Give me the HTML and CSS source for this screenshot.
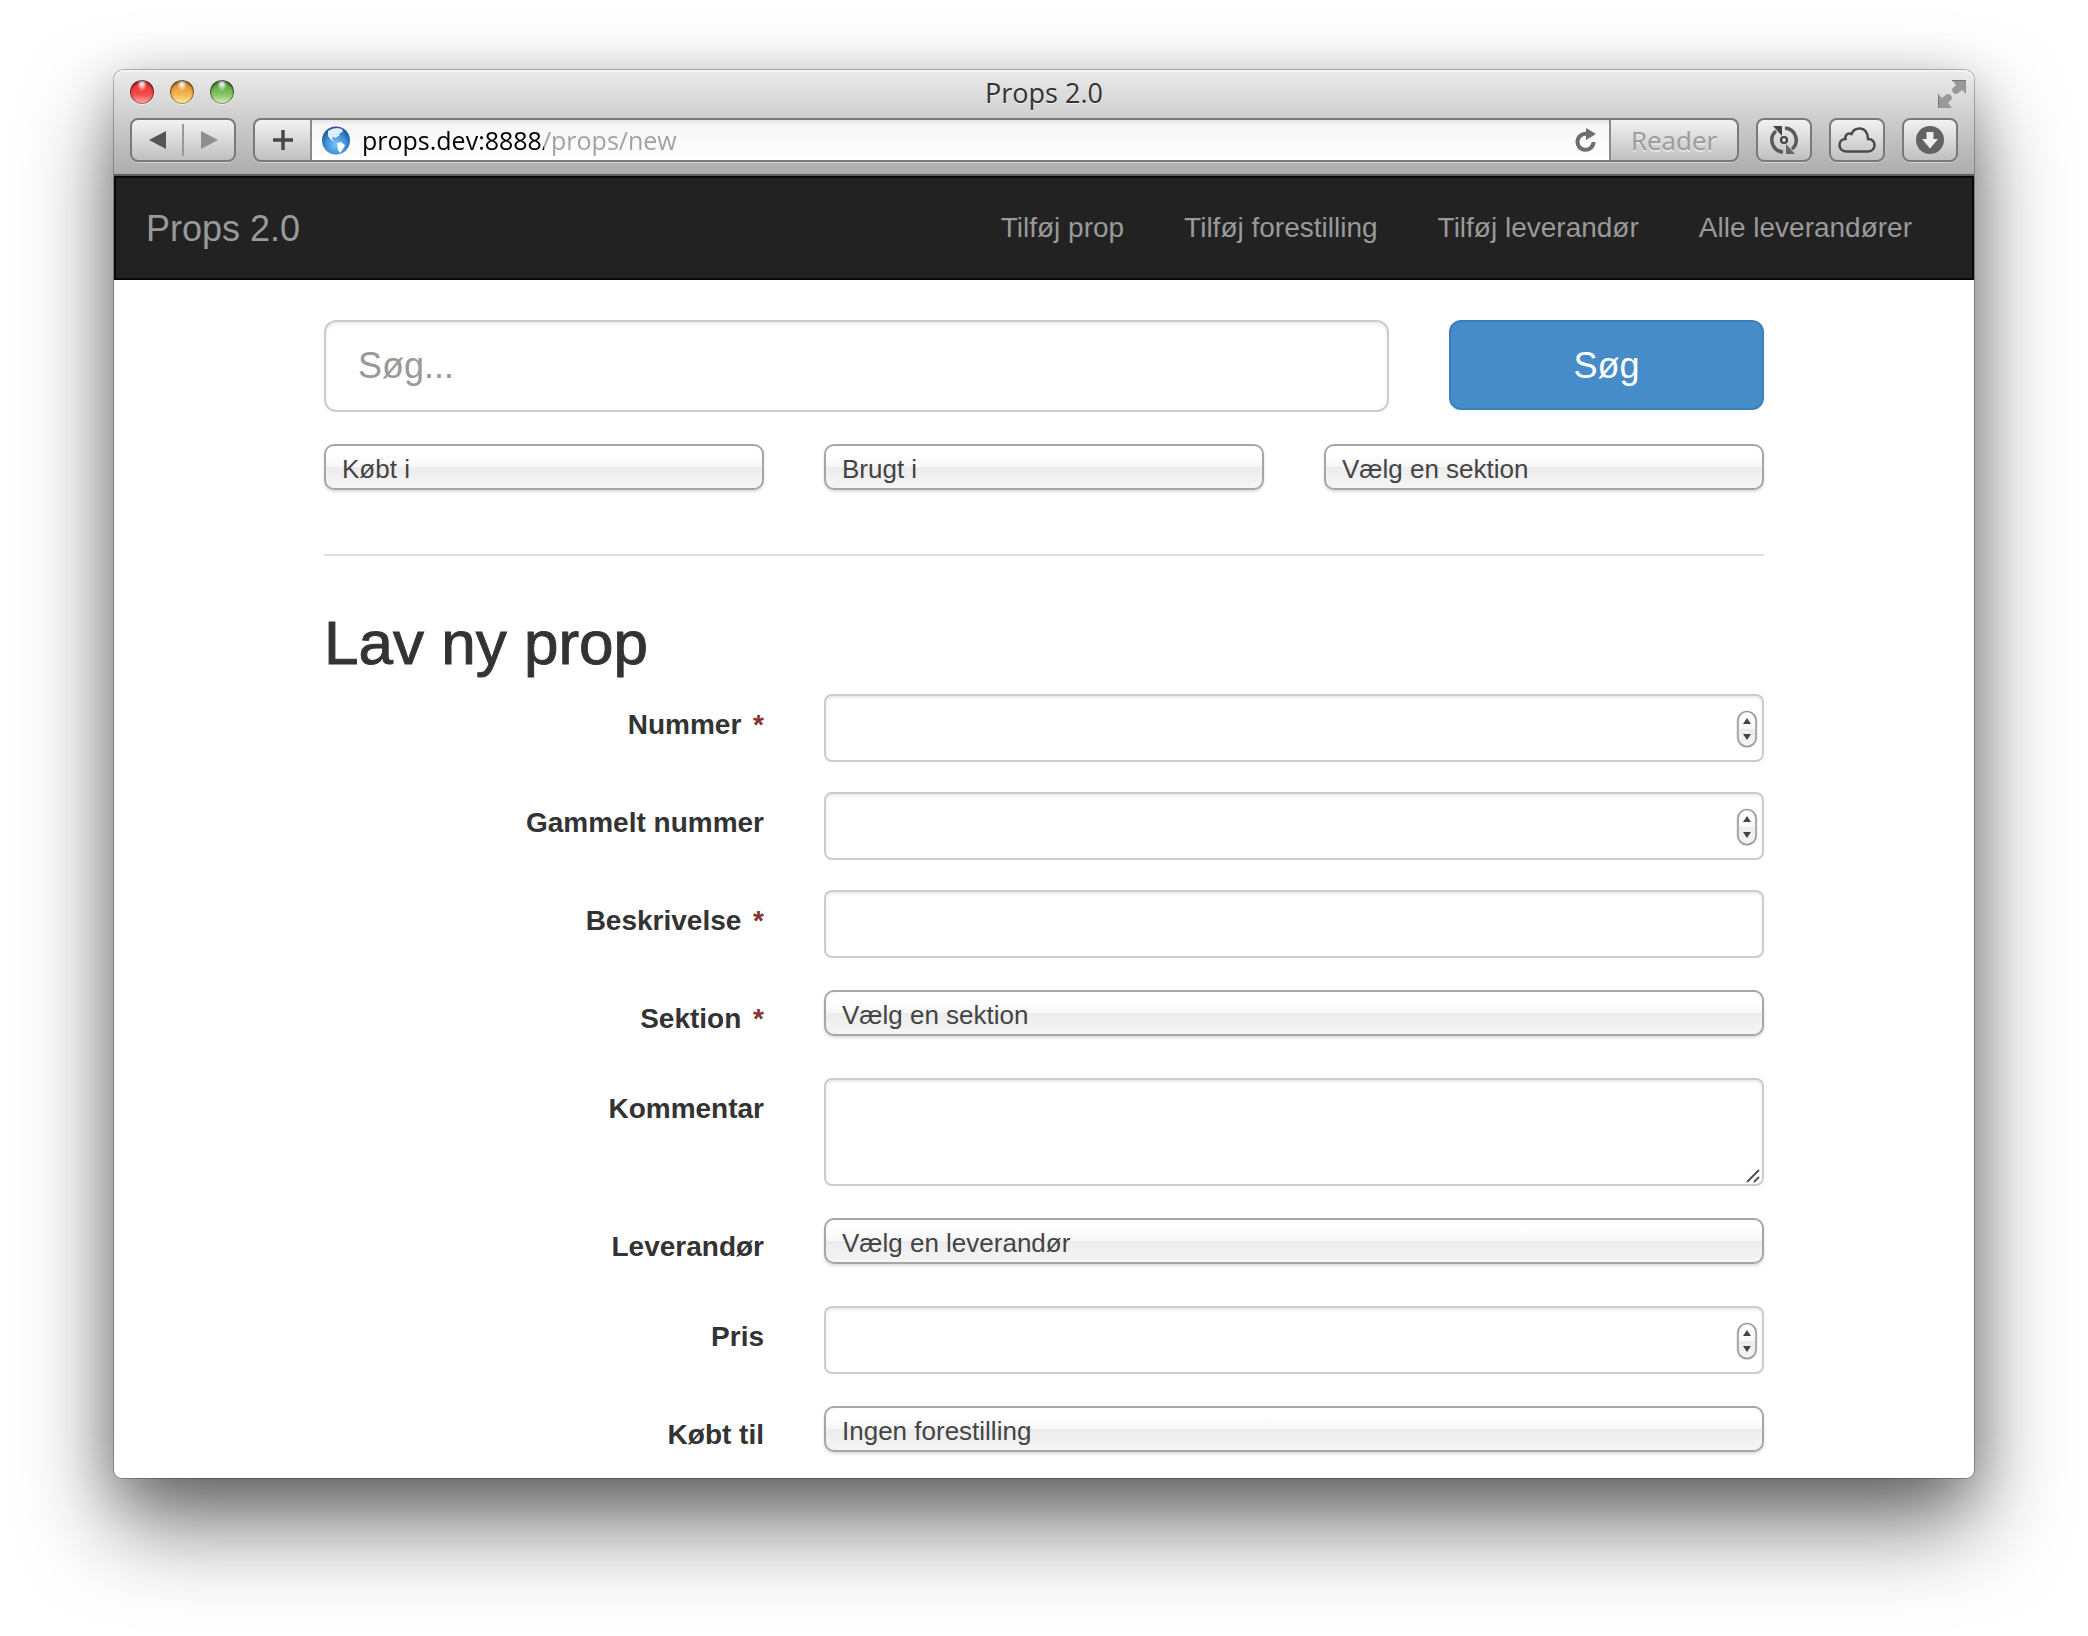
FILE: index.html
```
<!DOCTYPE html>
<html lang="da">
<head>
<meta charset="utf-8">
<title>Props 2.0</title>
<link rel="stylesheet" href="styles.css">
</head>
<body>
<div class="window">
  <header class="chrome">
    <div class="titlebar">
      <div class="lights">
        <button class="light light-red" aria-label="Luk"></button>
        <button class="light light-yellow" aria-label="Minimer"></button>
        <button class="light light-green" aria-label="Zoom"></button>
      </div>
      <div class="window-title">Props 2.0</div>
      <button class="fullscreen" aria-label="Fuld skærm">
        <svg width="28" height="28" viewBox="0 0 28 28" fill="#999"><path d="M14 0H28V14L24 10L19 14Q14 14 14 9L18 5Z"/><path d="M14 28H0V14L4 18L9 14Q14 14 14 19L10 23Z"/><path d="M14 0.500H28M0.500 14V28" stroke="#777" fill="none"/></svg>
      </button>
    </div>
    <div class="toolbar">
      <div class="history">
        <button class="history-button" aria-label="Tilbage"><svg width="17" height="18" viewBox="0 0 17 18"><path d="M17 0V18L0 9Z" fill="#555"/></svg></button>
        <button class="history-button" aria-label="Frem"><svg width="17" height="18" viewBox="0 0 17 18"><path d="M0 0V18L17 9Z" fill="#8e8e8e"/></svg></button>
      </div>
      <div class="address">
        <button class="address-add" aria-label="Tilføj bogmærke"><svg width="20" height="20" viewBox="0 0 20 20"><path d="M10 0V20M0 10H20" stroke="#484848" stroke-width="3.500"/></svg></button>
        <div class="address-field">
          <svg width="28" height="29" viewBox="0 0 28 29">
            <defs><radialGradient id="globe" cx="50%" cy="65%" r="60%"><stop offset="0" stop-color="#7cc4f6"/><stop offset="0.600" stop-color="#3f8ed8"/><stop offset="1" stop-color="#1e5699"/></radialGradient></defs>
            <circle cx="14" cy="14.500" r="14" fill="url(#globe)"/>
            <path d="M6 5Q10 2 15 2L20 3L21 6L18 7L17 10L13 12L10 11L11 14L14 16L9 14L6 10Z" fill="#dcedfb"/>
            <path d="M15 17L19 16L23 19L21 23L18 27L16 24Z" fill="#fff"/>
          </svg>
          <input class="address-input" type="text" aria-label="Adresse" value="props.dev:8888/props/new">
          <button class="reload" aria-label="Genindlæs"><svg width="22" height="24" viewBox="0 0 22 24"><path d="M12 6A8 8 0 1 0 18.500 14" fill="none" stroke="#6e6e6e" stroke-width="4"/><path d="M11 0L21 6L11 12Z" fill="#6e6e6e"/></svg></button>
        </div>
        <button class="reader">Reader</button>
      </div>
      <button class="tool" aria-label="Synkroniser">
        <svg width="28" height="28" viewBox="0 0 28 28" fill="none" stroke="#5a5a5a" stroke-width="3.500"><path d="M13 26A12 12 0 0 1 6 5"/><path d="M15 2A12 12 0 0 1 22 23"/><path d="M3 0H12V10Z" fill="#444" stroke="none"/><path d="M25 28H16V18Z" fill="#666" stroke="none"/><circle cx="14" cy="14" r="3" stroke="#444" stroke-width="2.200"/></svg>
      </button>
      <button class="tool" aria-label="iCloud-faner">
        <svg width="38" height="26" viewBox="0 0 38 26" fill="none" stroke="#4a4a4a" stroke-width="2.500"><path d="M9 24.500C4 24.500 1.500 21.500 1.500 18S4 12 7.500 12C6.500 8 10 5.500 13.500 7C15 3 18 1.500 21.500 1.500C26.500 1.500 30 5.500 30 12C34 12 36.500 14.500 36.500 18S34 24.500 29.500 24.500Z"/></svg>
      </button>
      <button class="tool" aria-label="Overførsler">
        <svg width="28" height="28" viewBox="0 0 28 28"><circle cx="14" cy="14" r="14" fill="#636363"/><path d="M10.500 6H17.500V13H22L14 22.500L6 13H10.500Z" fill="#eee"/></svg>
      </button>
    </div>
  </header>

  <nav class="navbar">
    <a class="brand" href="#">Props 2.0</a>
    <div class="nav-links">
      <a href="#">Tilføj prop</a>
      <a href="#">Tilføj forestilling</a>
      <a href="#">Tilføj leverandør</a>
      <a href="#">Alle leverandører</a>
    </div>
  </nav>

  <main class="container">
    <form class="search">
      <input class="search-input" type="text" placeholder="Søg..." aria-label="Søg">
      <button class="search-button" type="button">Søg</button>
      <select class="select" aria-label="Købt i"><option>Købt i</option></select>
      <select class="select" aria-label="Brugt i"><option>Brugt i</option></select>
      <select class="select" aria-label="Sektion"><option>Vælg en sektion</option></select>
    </form>
    <hr class="divider">
    <h1 class="heading">Lav ny prop</h1>
    <form class="prop-form">
      <div class="row">
        <label for="number">Nummer <span class="required">*</span></label>
        <div class="field"><input class="control" id="number" type="number"><svg class="stepper"><use href="#stepper"/></svg></div>
      </div>
      <div class="row">
        <label for="old-number">Gammelt nummer</label>
        <div class="field"><input class="control" id="old-number" type="number"><svg class="stepper"><use href="#stepper"/></svg></div>
      </div>
      <div class="row">
        <label for="description">Beskrivelse <span class="required">*</span></label>
        <div class="field"><input class="control" id="description" type="text"></div>
      </div>
      <div class="row">
        <label for="section">Sektion <span class="required">*</span></label>
        <div class="field field-select"><select class="select" id="section"><option>Vælg en sektion</option></select></div>
      </div>
      <div class="row">
        <label for="comment">Kommentar</label>
        <div class="field"><textarea class="control control-area" id="comment"></textarea><svg class="grip" viewBox="0 0 14 14"><path d="M1 13L13 1M8 13L13 8" stroke="#555" stroke-width="2"/></svg></div>
      </div>
      <div class="row">
        <label for="supplier">Leverandør</label>
        <div class="field field-select"><select class="select" id="supplier"><option>Vælg en leverandør</option></select></div>
      </div>
      <div class="row">
        <label for="price">Pris</label>
        <div class="field"><input class="control" id="price" type="number"><svg class="stepper"><use href="#stepper"/></svg></div>
      </div>
      <div class="row">
        <label for="bought-for">Købt til</label>
        <div class="field field-select"><select class="select" id="bought-for"><option>Ingen forestilling</option></select></div>
      </div>
    </form>
  </main>
</div>

<svg class="symbols" aria-hidden="true">
  <defs><linearGradient id="stepper-fill" x1="0" y1="0" x2="0" y2="1"><stop offset="0" stop-color="#fff"/><stop offset="0.500" stop-color="#f8f8f8"/><stop offset="0.500" stop-color="#ececec"/><stop offset="1" stop-color="#f4f4f4"/></linearGradient></defs>
  <symbol id="stepper" viewBox="0 0 22 38">
    <rect x="1.500" y="2" width="19" height="35" rx="9" fill="none" stroke="#ddd" stroke-width="2"/>
    <rect x="2" y="1.500" width="18" height="35" rx="9" fill="url(#stepper-fill)" stroke="#999" stroke-width="1.500"/>
    <path d="M7 14L11 8L15 14ZM7 24L11 30L15 24Z" fill="#444"/>
  </symbol>
</svg>
</body>
</html>
```

FILE: styles.css
```
* { box-sizing: border-box; }

body {
  margin: 0;
  background: #fff;
  color: #333;
  font: 28px/40px "Liberation Sans", Arial, sans-serif;
}

button, input, select, textarea { margin: 0; font-family: inherit; }
button { padding: 0; border: 0; background: none; }
svg { display: block; flex: none; }
.symbols { position: absolute; width: 0; height: 0; }

.window {
  margin: 70px 114px 158px;
  border-radius: 10px 10px 8px 8px;
  background: #fff;
  box-shadow:
    0 0 0 1px rgba(0, 0, 0, 0.25),
    0 10px 50px rgba(0, 0, 0, 0.2),
    0 46px 90px rgba(0, 0, 0, 0.56);
}

/* Browser chrome */
.chrome {
  padding-bottom: 12px;
  border-bottom: 2px solid #5c5c5c;
  border-radius: 10px 10px 0 0;
  background: linear-gradient(#ebebeb, #cdcdcd 48%, #adadad);
  box-shadow: inset 0 2px 0 #f4f4f4;
  font-family: "Open Sans", "Noto Sans", sans-serif;
}

.titlebar {
  display: grid;
  grid-template-columns: 1fr auto 1fr;
  align-items: center;
  height: 48px;
  padding: 0 8px;
}
.lights { display: flex; gap: 16px; padding: 0 0 4px 8px; }
.light {
  width: 24px;
  height: 24px;
  border-radius: 50%;
  box-shadow: inset 0 2px 3px rgba(0, 0, 0, 0.5), inset 0 0 0 1px rgba(0, 0, 0, 0.4), 0 1px 1px #eee;
}
.light-red { background: radial-gradient(ellipse at 50% 10%, #fff 5%, transparent 30%), linear-gradient(#e33 10%, #f44a48 60%, #f9b4b4); }
.light-yellow { background: radial-gradient(ellipse at 50% 10%, #fff 5%, transparent 30%), linear-gradient(#e08f30 10%, #f4b450 60%, #fbf0a0); }
.light-green { background: radial-gradient(ellipse at 50% 10%, #fff 5%, transparent 30%), linear-gradient(#55a03c 10%, #84c566 60%, #d9f0bc); }
.window-title { padding-bottom: 2px; color: #333; font-size: 27px; line-height: 40px; text-shadow: 0 1px 0 #f0f0f0; }
.fullscreen { justify-self: end; }

.toolbar { display: flex; gap: 17px; height: 44px; padding: 0 16px; }
.history, .tool, .address {
  display: flex;
  align-items: center;
  justify-content: center;
  border: 2px solid #7a7a7a;
  border-radius: 8px;
  background: linear-gradient(#f2f2f2, #c0c0c0);
  box-shadow: 0 1px 0 #d2d2d2;
}
.history { width: 106px; }
.history-button { display: flex; flex: 1; align-items: center; justify-content: center; height: 32px; }
.history-button + .history-button { border-left: 2px solid #999; }
.address { flex: 1; align-items: stretch; overflow: hidden; }
.address-add { display: flex; align-items: center; justify-content: center; width: 57px; border-right: 2px solid #8a8a8a; }
.address-field {
  display: flex;
  flex: 1;
  align-items: center;
  gap: 12px;
  padding: 0 12px 0 10px;
  background: linear-gradient(#e4e4e4, #f6f6f6 12%, #fff);
}
.address-input {
  flex: 1;
  min-width: 0;
  height: 40px;
  padding: 0;
  border: 0;
  outline: 0;
  background: linear-gradient(90deg, #000 182px, #a0a0a0 182px);
  background-clip: text;
  -webkit-text-fill-color: transparent;
  font-size: 25px;
}
.reader { width: 128px; border-left: 2px solid #8a8a8a; color: #9c9c9c; font-size: 26px; text-shadow: 0 2px 0 #e4e4e4; }
.tool { width: 56px; }

/* Site navigation */
.navbar {
  display: flex;
  justify-content: space-between;
  padding: 30px;
  border: 2px solid #080808;
  background: #222;
}
.navbar a { color: #999; text-decoration: none; }
.navbar .brand { height: 40px; font-size: 36px; line-height: 42px; }
.nav-links { display: flex; gap: 60px; padding-right: 30px; }

/* Search */
.container { max-width: 1500px; margin: 0 auto; padding: 40px 30px 14px; }
.search {
  display: grid;
  grid-template-columns: repeat(12, 1fr);
  gap: 32px 60px;
}
.search .select { grid-column: span 4; }
.search-input, .search-button { height: 92px; border-radius: 12px; font-size: 36px; }
.search-input { grid-column: span 9; padding: 0 32px; border: 2px solid #ccc; box-shadow: inset 0 2px 3px rgba(0, 0, 0, 0.08); }
.search-input::placeholder { color: #999; opacity: 1; }
.search-button { grid-column: span 3; height: 90px; padding-top: 2px; border: 2px solid #3a80bd; background: #468cc8; color: #fff; }

.select {
  width: 100%;
  height: 46px;
  padding: 3px 16px 0;
  border: 2px solid #a6a6a6;
  border-radius: 10px;
  appearance: none;
  background: linear-gradient(#fff 20%, #f7f7f7 50%, #ececec 50%, #f5f5f5);
  box-shadow: 0 2px 3px rgba(0, 0, 0, 0.14);
  color: #444;
  font-size: 26px;
}
.divider { height: 2px; margin: 64px 0 0; border: 0; background: #ddd; }
.heading {
  margin: 54px 0 18px;
  font-size: 62px;
  font-weight: 400;
  line-height: 66px;
  -webkit-text-stroke: 1px #333;
}

/* Prop form */
.prop-form { display: grid; gap: 30px; }
.row { display: grid; grid-template-columns: 440fr 940fr; gap: 60px; }
.row label { padding-top: 11px; font-weight: 700; text-align: right; }
.required { margin-left: 4px; color: #843534; }
.field { position: relative; }
.field-select { height: 60px; padding-top: 2px; }
.control {
  display: block;
  width: 100%;
  height: 68px;
  padding: 12px 24px;
  border: 2px solid #ccc;
  border-radius: 8px;
  background: #fff;
  box-shadow: inset 0 2px 3px rgba(0, 0, 0, 0.08);
  color: #555;
  font-size: 28px;
  appearance: textfield;
}
.control-area { height: 108px; resize: none; }
.stepper { position: absolute; top: 16px; right: 6px; width: 22px; height: 38px; }
.grip { position: absolute; right: 4px; bottom: 3px; width: 14px; height: 14px; }
```
